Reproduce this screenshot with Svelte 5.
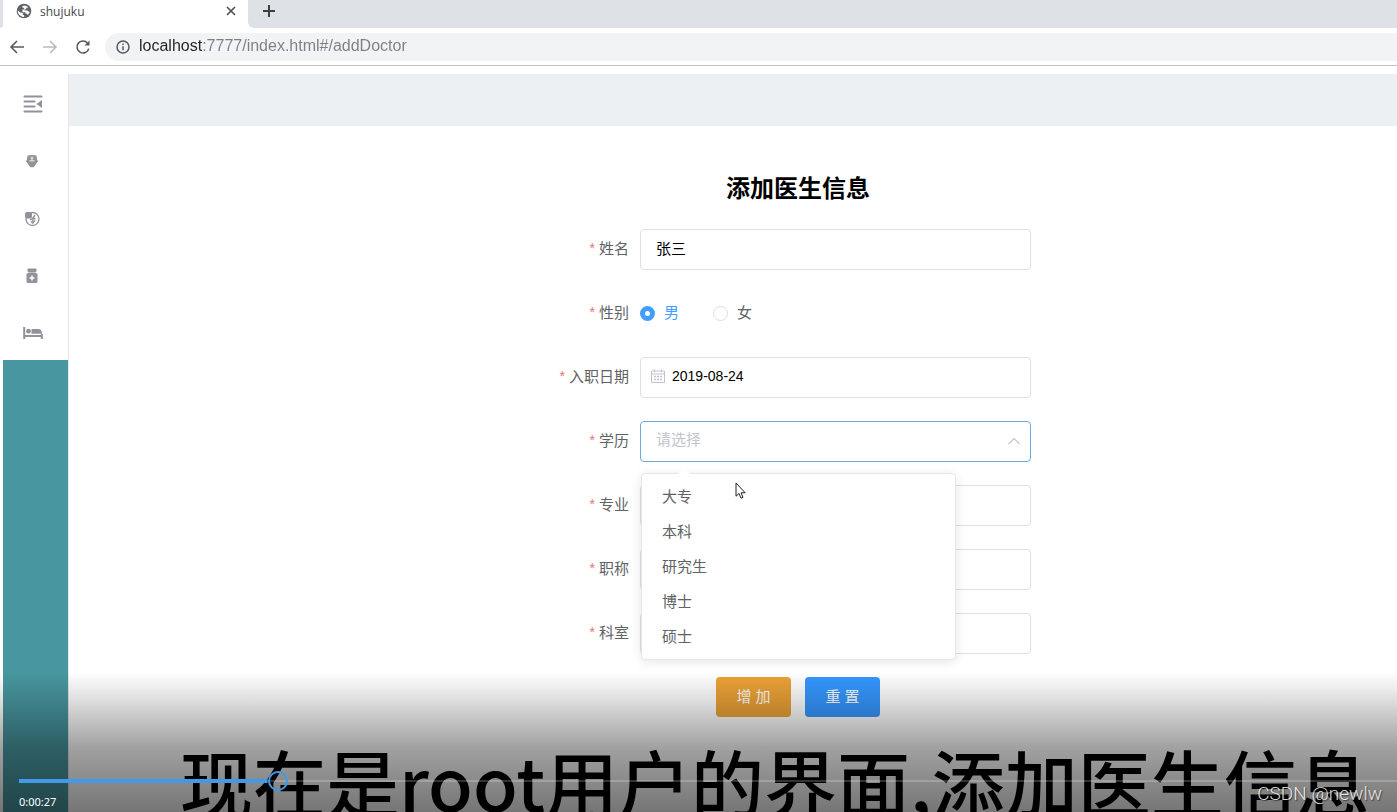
<script lang="ts">
  interface Field {
    id: string;
    label: string;
    kind: 'text' | 'radio' | 'date' | 'select';
  }

  const fields: Field[] = [
    { id: 'name', label: '姓名', kind: 'text' },
    { id: 'sex', label: '性别', kind: 'radio' },
    { id: 'hiredate', label: '入职日期', kind: 'date' },
    { id: 'degree', label: '学历', kind: 'select' },
    { id: 'major', label: '专业', kind: 'text' },
    { id: 'title', label: '职称', kind: 'text' },
    { id: 'dept', label: '科室', kind: 'text' },
  ];
  const degrees = ['大专', '本科', '研究生', '博士', '硕士'];
  const navItems = ['collapse', 'doctor', 'fee', 'medicine', 'ward'];

  const emptyForm = { name: '', sex: '男', hiredate: '', degree: '', major: '', title: '', dept: '' };

  let form: Record<string, string> = $state({ ...emptyForm, name: '张三', hiredate: '2019-08-24' });
  let open = $state(true);
  let url = $state('localhost:7777/index.html#/addDoctor');
  let progress = $state(0.183);

  function pick(d: string) {
    form.degree = d;
    open = false;
  }

  function reset() {
    form = { ...emptyForm };
  }
</script>

<div class="screen">
  <header class="browser">
    <div class="tabs">
      <div class="prev-tab"></div>
      <div class="tab">
        <svg width="16" height="16" viewBox="0 0 16 16">
          <circle cx="8" cy="8" r="7.3" fill="#5f6368" />
          <path d="M1.800 7.600l3 2.200h2v1.600l1.400 1v1.500C4.800 14.200 1.600 11.500 1.800 7.600zM6.500 3c2-.8 4.600-.2 5.800 1.400l-2 .4v1.400H8.600v1.400h2.600c1 .3 1.400 1.200 2.400 1.100-.2 1.600-1 2.600-2 3.400l-.8-1.600H9.400V9.200H6.500V6.600h1.600V4.800H6.500z" fill="#fff" />
        </svg>
        <span class="tab-title">shujuku</span>
        <button class="icon-btn" aria-label="Close tab">
          <svg width="10" height="10" viewBox="0 0 10 10"><path d="M1 1l8 8M9 1l-8 8" stroke="#4a4d51" stroke-width="1.600" /></svg>
        </button>
      </div>
      <button class="icon-btn new-tab" aria-label="New tab">
        <svg width="14" height="14" viewBox="0 0 14 14"><path d="M7 1v12M1 7h12" stroke="#3c4043" stroke-width="2" /></svg>
      </button>
    </div>
    <div class="toolbar">
      <button class="icon-btn" aria-label="Back">
        <svg width="16" height="16" viewBox="0 0 16 16"><path d="M15 8H2.500M8 2L2 8l6 6" fill="none" stroke="#55585c" stroke-width="1.600" /></svg>
      </button>
      <button class="icon-btn" aria-label="Forward">
        <svg width="16" height="16" viewBox="0 0 16 16"><path d="M1 8h12.500M8 2l6 6-6 6" fill="none" stroke="#b9bbbe" stroke-width="1.600" /></svg>
      </button>
      <button class="icon-btn" aria-label="Reload">
        <svg width="16" height="16" viewBox="0 0 16 16">
          <path d="M12.500 4a6 6 0 1 0 1.300 5.600" fill="none" stroke="#55585c" stroke-width="1.600" />
          <path d="M14.500 1.500v5H9.500z" fill="#55585c" />
        </svg>
      </button>
      <div class="omnibox">
        <svg width="14" height="14" viewBox="0 0 14 14">
          <circle cx="7" cy="7" r="6" fill="none" stroke="#55585c" stroke-width="1.500" />
          <path d="M7 6.200v4M7 3.500v1.500" stroke="#55585c" stroke-width="1.500" />
        </svg>
        <input class="url" aria-label="Address" bind:value={url} />
      </div>
    </div>
  </header>

  <div class="app">
    <nav class="sidebar">
      {#each navItems as item (item)}
        <button class="nav-item" aria-label={item}>
          {#if item === 'collapse'}
            <svg width="20" height="18" viewBox="0 0 20 18">
              <path d="M1.500 1.500h17M1.500 6.500h10M1.500 11.500h10M1.500 16.500h17" stroke="currentColor" stroke-width="2" stroke-linecap="round" />
              <path d="M19 5v8L13.500 9z" fill="currentColor" />
            </svg>
          {:else if item === 'doctor'}
            <svg width="20" height="18" viewBox="0 0 20 18">
              <path d="M4.500 2.500Q9 1.500 13.500 2.500L14 6.500l1 1.500-2.500 4-2 2.300h-3L5.500 12 3 8l1-1.500z" fill="currentColor" />
              <path d="M9 3.800v3M7.500 5h3M6.500 7.800h5" stroke="#fff" stroke-width=".9" />
            </svg>
          {:else if item === 'fee'}
            <svg width="20" height="18" viewBox="0 0 20 18">
              <circle cx="9.500" cy="9" r="6.500" fill="none" stroke="currentColor" stroke-width="1.300" />
              <rect x="2" y="2" width="7" height="6.500" rx="2" fill="currentColor" />
              <path d="M12 5l-2 3M7 9.500l5.500-1M9.800 7.500l.2 6M8 11.500l2 2M12.300 10.500l-2 1.500" fill="none" stroke="currentColor" stroke-width="1.400" />
            </svg>
          {:else if item === 'medicine'}
            <svg width="20" height="18" viewBox="0 0 20 18">
              <rect x="4.500" y="1.500" width="9" height="3.500" rx="1" fill="currentColor" />
              <path d="M5.500 5h7v2h-7z" fill="currentColor" opacity=".6" />
              <rect x="3.500" y="6" width="11" height="10" rx="1.500" fill="currentColor" />
              <path d="M9 8.500v5M6.500 11h5" stroke="#fff" stroke-width="1.500" />
            </svg>
          {:else}
            <svg width="20" height="18" viewBox="0 0 20 18">
              <path d="M1.200 3v12M1.200 12h17.600M18.800 10v5" stroke="currentColor" stroke-width="2" />
              <circle cx="5.500" cy="7.200" r="2.400" fill="currentColor" />
              <path d="M8.500 5H16q3 .5 3 4.800H8.500z" fill="currentColor" />
            </svg>
          {/if}
        </button>
      {/each}
    </nav>

    <div class="content">
      <div class="topbar"></div>
      <main>
        <h2>添加医生信息</h2>
        <form onsubmit={(e) => e.preventDefault()}>
          {#each fields as f (f.id)}
            <div class="row">
              <label class="row-label" for={f.kind === 'radio' ? 'sex-男' : f.id}><span class="star">*</span>{f.label}</label>
              <div class="control">
                {#if f.kind === 'radio'}
                  <div class="radios">
                    {#each ['男', '女'] as s (s)}
                      <label class:checked={form.sex === s}>
                        <input type="radio" id="sex-{s}" name="sex" value={s} bind:group={form.sex} />
                        <span>{s}</span>
                      </label>
                    {/each}
                  </div>
                {:else if f.kind === 'select'}
                  <select id={f.id} class="field" class:placeholder={!form.degree} class:open bind:value={form.degree} onmousedown={(e) => { e.preventDefault(); open = !open; }}>
                    <option value="">请选择</option>
                    {#each degrees as d (d)}
                      <option value={d}>{d}</option>
                    {/each}
                  </select>
                  <svg class="chevron" class:flip={!open} width="12" height="8" viewBox="0 0 12 8"><path d="M.5 7L6 1.500 11.500 7" fill="none" stroke="#c0c4cc" stroke-width="1.200" /></svg>
                  {#if open}
                    <div class="dropdown">
                      {#each degrees as d (d)}
                        <button type="button" onclick={() => pick(d)}>{d}</button>
                      {/each}
                      <svg class="cursor" width="12" height="18" viewBox="0 0 12 18">
                        <path d="M1 1v13.200l3-2.700 2 4.700 2-.9-2-4.500h4.200z" fill="#fff" stroke="#222" stroke-width="1" />
                      </svg>
                    </div>
                  {/if}
                {:else}
                  <input id={f.id} class="field {f.kind}" type="text" bind:value={form[f.id]} />
                  {#if f.kind === 'date'}
                    <svg class="calendar" width="14" height="14" viewBox="0 0 14 14">
                      <path d="M.5 2h13v11.500H.5zM.5 5h13M3.500.3v3M10.500.3v3" fill="none" stroke="#c0c4cc" />
                      <path d="M3 7.500h8M3 10.500h8" stroke="#c0c4cc" stroke-width="1.300" stroke-dasharray="2 1" />
                    </svg>
                  {/if}
                {/if}
              </div>
            </div>
          {/each}
          <div class="actions">
            <button class="btn warning" type="submit">增 加</button>
            <button class="btn primary" type="button" onclick={reset}>重 置</button>
          </div>
        </form>
      </main>
    </div>
  </div>

  <p class="subtitle">现在是root用户的界面,添加医生信息</p>

  <div class="player">
    <input class="seek" type="range" min="0" max="1" step="any" aria-label="Seek" bind:value={progress} style="--progress:{progress}" />
    <span class="time">0:00:27</span>
  </div>
  <span class="watermark">CSDN @newlw</span>
</div>

<style>
  :global(body) {
    margin: 0;
  }

  .screen {
    position: relative;
    display: flex;
    flex-direction: column;
    min-height: 100vh;
    overflow: hidden;
    background: #fff;
    color: #606266;
    font-family: "Liberation Sans", "Noto Sans CJK SC", sans-serif;
    font-size: 15px;
  }

  .screen * {
    box-sizing: border-box;
  }

  button,
  input,
  select {
    font: inherit;
  }

  .icon-btn {
    display: flex;
    padding: 0;
    border: 0;
    background: none;
  }

  /* Browser frame */
  .browser {
    border-bottom: 1px solid #c4bfc0;
  }

  .tabs {
    display: flex;
    height: 28px;
    background: linear-gradient(to right, #fff 50%, #dee1e6 50%);
  }

  .prev-tab {
    width: 3px;
    border-radius: 0 0 3px 0;
    background: #dee1e6;
  }

  .tab {
    display: flex;
    align-items: center;
    gap: 8px;
    width: 245px;
    padding: 0 12px 6px 13px;
    background: #fff;
  }

  .tab-title {
    flex: 1;
    color: #45494d;
    font-family: "Open Sans", sans-serif;
    font-size: 12px;
  }

  .new-tab {
    flex: 1;
    align-items: center;
    padding: 0 14px 6px;
    border-radius: 0 0 0 6px;
    background: #dee1e6;
  }

  .toolbar {
    display: flex;
    align-items: center;
    gap: 17px;
    height: 37px;
    padding-left: 9px;
    background: #fff;
  }

  .omnibox {
    display: flex;
    flex: 1;
    align-items: center;
    gap: 9px;
    height: 28px;
    margin-left: -3px;
    padding-left: 11px;
    border-radius: 14px 0 0 14px;
    background: #f1f3f4;
  }

  .url {
    flex: 1;
    padding: 0 0 1px;
    border: 0;
    outline: 0;
    /* host part is darker than the path */
    background: linear-gradient(to right, #202124 63px, #7b8085 63px);
    background-clip: text;
    color: transparent;
    caret-color: #202124;
    font-size: 16px;
  }

  /* App shell */
  .app {
    display: flex;
    flex: 1;
    padding: 8px 0 0 3px;
  }

  .sidebar {
    display: flex;
    flex-direction: column;
    width: 66px;
    border-right: 1px solid #e6e6e6;
    background: #48969f;
  }

  .nav-item {
    display: flex;
    align-items: center;
    height: 57px;
    padding: 2px 0 0 20px;
    border: 0;
    background: #fff;
    color: #909399;
  }

  .nav-item:first-child {
    height: 58px;
  }

  .content {
    flex: 1;
  }

  .topbar {
    height: 52px;
    background: #ecf0f3;
  }

  main {
    display: flex;
    flex-direction: column;
    align-items: center;
    padding: 45px 0 0 130px;
  }

  h2 {
    margin: 0 0 22px;
    color: #000;
    font-size: 24px;
    line-height: 36px;
  }

  form {
    display: flex;
    flex-direction: column;
    gap: 23px;
    width: 480px;
  }

  .row {
    display: flex;
    align-items: center;
    gap: 11px;
    height: 41px;
    padding-right: 7px;
  }

  .row-label {
    display: flex;
    flex: 1;
    justify-content: flex-end;
    gap: 4px;
    padding-bottom: 4px;
    white-space: nowrap;
  }

  .star {
    padding-top: 3px;
    color: #e57373;
    font-size: 14px;
  }

  .control {
    position: relative;
    width: 391px;
  }

  .field {
    display: block;
    width: 100%;
    height: 41px;
    padding: 0 15px 4px;
    border: 1px solid #dcdfe6;
    border-radius: 4px;
    outline: 0;
    appearance: none;
    background: #fff;
    color: #000;
  }

  .field.date {
    padding-left: 31px;
    font-size: 14px;
  }

  .field.placeholder {
    color: #c0c4cc;
  }

  .field.open {
    border-color: #6aabe0;
  }

  .calendar {
    position: absolute;
    top: 12px;
    left: 11px;
  }

  .chevron {
    position: absolute;
    top: 16px;
    right: 11px;
  }

  .chevron.flip {
    transform: rotate(180deg);
  }

  .radios {
    display: flex;
    gap: 34px;
  }

  .radios label {
    display: flex;
    align-items: center;
    gap: 9px;
  }

  .radios span {
    padding-bottom: 4px;
  }

  .radios label.checked {
    color: #409eff;
  }

  .radios input {
    width: 15px;
    height: 15px;
    margin: 0;
    border: 1px solid #dcdfe6;
    border-radius: 50%;
    appearance: none;
    background: #fff;
  }

  .radios input:checked {
    border: 5px solid #409eff;
  }

  .dropdown {
    position: absolute;
    z-index: 2;
    top: 52px;
    left: 1px;
    display: flex;
    flex-direction: column;
    width: 315px;
    padding: 5px 0;
    border: 1px solid #e4e7ed;
    border-radius: 4px;
    background: #fff;
    box-shadow: 0 2px 12px rgba(0, 0, 0, 0.1);
  }

  .dropdown::before {
    content: "";
    position: absolute;
    top: -4px;
    left: 38px;
    width: 8px;
    height: 8px;
    background: #fff;
    transform: rotate(45deg);
  }

  .dropdown button {
    height: 35px;
    padding: 0 20px 2px;
    border: 0;
    background: none;
    color: #606266;
    text-align: left;
  }

  .cursor {
    position: absolute;
    top: 8px;
    left: 93px;
  }

  .actions {
    display: flex;
    justify-content: center;
    gap: 14px;
  }

  .btn {
    width: 75px;
    height: 40px;
    padding: 0 0 3px;
    border: 0;
    border-radius: 4px;
    color: #fff;
  }

  .btn.warning {
    background: #eca236;
  }

  .btn.primary {
    background: #3597ff;
  }

  /* Video layer */
  .subtitle {
    position: absolute;
    bottom: -18px;
    left: 180px;
    margin: 0;
    color: #000;
    font-family: "Noto Sans CJK SC", sans-serif;
    font-size: 73px;
    font-weight: 500;
    line-height: 100px;
    white-space: nowrap;
  }

  .player {
    position: absolute;
    z-index: 3;
    right: 0;
    bottom: 0;
    left: 0;
    display: flex;
    flex-direction: column;
    justify-content: flex-end;
    height: 140px;
    padding-left: 19px;
    background: linear-gradient(transparent, rgba(0, 0, 0, 0.13) 20%, rgba(0, 0, 0, 0.37) 54%, rgba(0, 0, 0, 0.54));
  }

  .seek {
    width: 100%;
    height: 20px;
    margin: 0;
    appearance: none;
    background:
      linear-gradient(#4299e8, #4299e8) left center / calc((100% - 20px) * var(--progress)) 4px no-repeat,
      linear-gradient(rgba(255, 255, 255, 0.2), rgba(255, 255, 255, 0.2)) left center / 100% 2px no-repeat;
  }

  .seek::-webkit-slider-thumb {
    width: 20px;
    height: 20px;
    border: 2px solid #4299e8;
    border-radius: 50%;
    appearance: none;
    background: transparent;
  }

  .time {
    color: #fff;
    font-family: "Noto Sans", sans-serif;
    font-size: 11px;
    line-height: 21px;
  }

  .watermark {
    position: absolute;
    z-index: 4;
    right: 15px;
    bottom: 6px;
    color: rgba(255, 255, 255, 0.85);
    font-family: Roboto, sans-serif;
    font-size: 19px;
    font-weight: 300;
    line-height: 24px;
    text-shadow: 1px 1px 1px rgba(0, 0, 0, 0.5);
  }
</style>
